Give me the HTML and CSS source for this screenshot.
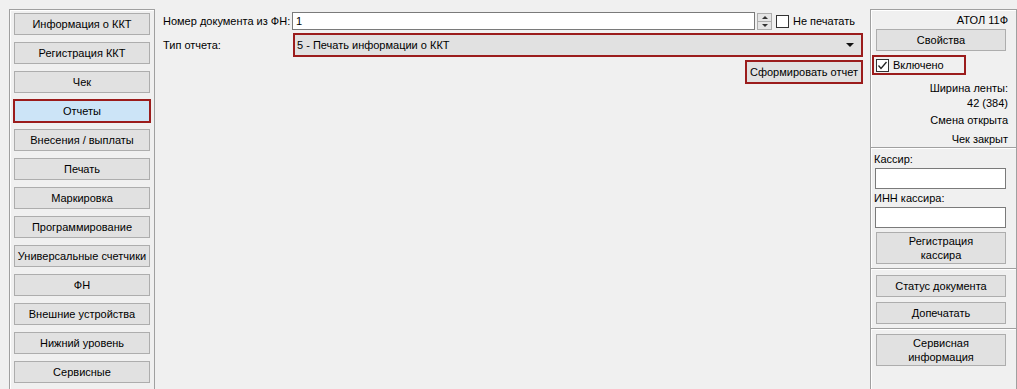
FILE: index.html
```html
<!DOCTYPE html>
<html lang="ru">
<head>
<meta charset="utf-8">
<title>Отчеты</title>
<link rel="stylesheet" href="styles.css">
</head>
<body>
<div class="app">
  <nav class="side">
    <div class="btn navbtn">Информация о ККТ</div>
    <div class="btn navbtn">Регистрация ККТ</div>
    <div class="btn navbtn">Чек</div>
    <div class="btn navbtn active">Отчеты</div>
    <div class="btn navbtn">Внесения / выплаты</div>
    <div class="btn navbtn">Печать</div>
    <div class="btn navbtn">Маркировка</div>
    <div class="btn navbtn">Программирование</div>
    <div class="btn navbtn">Универсальные счетчики</div>
    <div class="btn navbtn">ФН</div>
    <div class="btn navbtn">Внешние устройства</div>
    <div class="btn navbtn">Нижний уровень</div>
    <div class="btn navbtn">Сервисные</div>
  </nav>

  <main class="main">
    <div class="form">
      <div class="lbl">Номер документа из ФН:</div>
      <div class="row1">
        <div class="numinput">1</div>
        <div class="spin">
          <div class="spinbtn"><span class="tri-up"></span></div>
          <div class="spinbtn"><span class="tri-down"></span></div>
        </div>
        <div class="chk"></div>
        <div class="chklbl">Не печатать</div>
      </div>
      <div class="lbl lbl2">Тип отчета:</div>
      <div class="combo">
        <span>5 - Печать информации о ККТ</span>
        <span class="arrow"></span>
      </div>
      <div class="actions">
        <div class="btn makebtn">Сформировать отчет</div>
      </div>
    </div>
  </main>

  <aside class="right">
    <div class="title">АТОЛ 11Ф</div>
    <div class="btn rbtn props">Свойства</div>
    <div class="enabled">
      <span class="chk checked">
        <svg width="11" height="11" viewBox="0 0 11 11"><path d="M1.5 5.5 L4 8.5 L9.5 2" fill="none" stroke="#222" stroke-width="1.3"/></svg>
      </span>
      <span>Включено</span>
    </div>
    <div class="info i1">Ширина ленты:</div>
    <div class="info i2">42 (384)</div>
    <div class="info i3">Смена открыта</div>
    <div class="info i4">Чек закрыт</div>
    <div class="sep s1"></div>
    <div class="flabel f1">Кассир:</div>
    <div class="tinput"></div>
    <div class="flabel f2">ИНН кассира:</div>
    <div class="tinput"></div>
    <div class="btn rbtn tall reg">Регистрация<br>кассира</div>
    <div class="sep s2"></div>
    <div class="btn rbtn st">Статус документа</div>
    <div class="btn rbtn st">Допечатать</div>
    <div class="sep s3"></div>
    <div class="btn rbtn tall srv">Сервисная<br>информация</div>
  </aside>
</div>
</body>
</html>
```

FILE: styles.css
```css
* { box-sizing: border-box; }
html, body {
  margin: 0;
  padding: 0;
  background: #f0f0f0;
  font-family: "Liberation Sans", Arial, sans-serif;
  font-size: 11px;
  color: #000;
  overflow: hidden;
}
.app {
  display: flex;
  align-items: flex-start;
  width: 1017px;
  height: 389px;
  overflow: hidden;
}
.btn {
  background: #e1e1e1;
  border: 1px solid #adadad;
  display: flex;
  align-items: center;
  justify-content: center;
  text-align: center;
  line-height: 14px;
  white-space: nowrap;
}

/* left nav */
.side {
  margin: 9px 0 0 9px;
  width: 146px;
  height: 400px;
  flex: none;
  border: 1px solid #a0a0a0;
  box-shadow: inset 1px 1px 0 #fff;
  padding: 3px 0 0 4px;
  display: flex;
  flex-direction: column;
  gap: 7px;
}
.navbtn {
  width: 136px;
  height: 22px;
}
.navbtn.active {
  background: #cce4f7;
  border: 1px solid #9b1c1c;
  box-shadow: 0 0 0 1px #9b1c1c;
}

/* main */
.main {
  flex: 1;
  padding: 12px 7px 0 8px;
}
.form {
  display: grid;
  grid-template-columns: 129px 1fr;
  align-items: center;
}
.lbl { line-height: 14px; white-space: nowrap; }
.lbl2 { margin-top: 3px; }
.row1 {
  display: flex;
  align-items: center;
  height: 18px;
}
.numinput {
  flex: 1;
  height: 18px;
  background: #fff;
  border: 1px solid #7a7a7a;
  padding-left: 3px;
  line-height: 16px;
}
.spin {
  margin-left: 2px;
  width: 15px;
  height: 17px;
  display: flex;
  flex-direction: column;
  border: 1px solid #adadad;
  background: #e5e5e5;
}
.spinbtn {
  flex: 1;
  display: flex;
  align-items: center;
  justify-content: center;
}
.spinbtn + .spinbtn { border-top: 1px solid #adadad; }
.tri-up, .tri-down {
  width: 0; height: 0;
  border-left: 3px solid transparent;
  border-right: 3px solid transparent;
}
.tri-up { border-bottom: 3px solid #333; }
.tri-down { border-top: 3px solid #333; }
.chk {
  width: 13px;
  height: 13px;
  background: #fff;
  border: 1px solid #333;
  margin-left: 4px;
  flex: none;
  display: inline-flex;
  align-items: center;
  justify-content: center;
}
.chklbl {
  margin-left: 4px;
  width: 70px;
  line-height: 14px;
  white-space: nowrap;
}
.combo {
  margin-top: 3px;
  margin-left: 1px;
  height: 24px;
  background: #e1e1e1;
  border: 2px solid #9b1c1c;
  display: flex;
  align-items: center;
  justify-content: space-between;
  padding: 0 7px 0 2px;
}
.arrow {
  width: 0; height: 0;
  border-left: 4px solid transparent;
  border-right: 4px solid transparent;
  border-top: 4px solid #111;
}
.actions {
  grid-column: 2;
  display: flex;
  justify-content: flex-end;
  margin-top: 3px;
}
.makebtn {
  width: 118px;
  height: 24px;
  border: 2px solid #9b1c1c;
}

/* right panel */
.right {
  margin-top: 9px;
  width: 147px;
  height: 400px;
  flex: none;
  border: 1px solid #a0a0a0;
  box-shadow: inset 1px 1px 0 #fff;
  padding: 2px 10px 0 5px;
  display: flex;
  flex-direction: column;
}
.title {
  line-height: 16px;
  text-align: right;
  margin-right: -2px;
}
.rbtn { height: 22px; }
.props { margin-top: 1px; }
.enabled {
  margin-top: 4px;
  margin-left: -4px;
  width: 94px;
  height: 20px;
  border: 2px solid #9b1c1c;
  display: flex;
  align-items: center;
  padding-left: 2px;
}
.enabled .chk {
  margin-left: 0;
  border-color: #333;
}
.enabled span:last-child { margin-left: 4px; }
.info {
  line-height: 14px;
  text-align: right;
  margin-right: -2px;
}
.i1 { margin-top: 6px; }
.i2 { margin-top: 1px; }
.i3 { margin-top: 3px; }
.i4 { margin-top: 5px; }
.sep {
  margin-left: -5px;
  margin-right: -10px;
  height: 2px;
  border-top: 1px solid #a0a0a0;
  border-bottom: 1px solid #fff;
}
.s1 { margin-top: 1px; }
.flabel {
  line-height: 14px;
  margin-left: -2px;
}
.f1 { margin-top: 3px; }
.f2 { margin-top: 2px; }
.tinput {
  margin-top: 2px;
  margin-left: -1px;
  height: 21px;
  background: #fff;
  border: 1px solid #7a7a7a;
}
.tall { height: 32px; }
.reg { margin-top: 4px; }
.s2 { margin-top: 4px; }
.st { margin-top: 5px; }
.s3 { margin-top: 4px; }
.srv { margin-top: 4px; }
```
